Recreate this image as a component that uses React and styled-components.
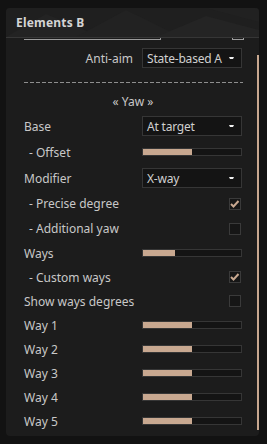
import styled, { createGlobalStyle } from "styled-components";

const GlobalStyle = createGlobalStyle`
  html, body {
    margin: 0;
    padding: 0;
    background: #121212;
  }
  body {
    font-family: "Noto Sans", "Open Sans", sans-serif;
  }
`;

const TAN = "#c8a890";

const Panel = styled.div`
  margin: 8px 8px 8px 6px;
  width: 253px;
  height: 428px;
  background: #1c1c1c;
  border-radius: 4px;
  overflow: hidden;
  display: flex;
  flex-direction: column;
`;

const Header = styled.div`
  position: relative;
  height: 29px;
  flex-shrink: 0;
  background: #1f1f1f;
  border-bottom: 1px solid #363636;
  display: flex;
  align-items: center;
  padding-left: 10px;
  overflow: hidden;
`;

const HeaderArt = styled.svg`
  position: absolute;
  inset: 0;
  width: 100%;
  height: 100%;
`;

const Title = styled.span`
  position: relative;
  color: #d4d4d4;
  font-weight: 700;
  font-size: 12px;
  letter-spacing: 0.2px;
`;

const Body = styled.div`
  position: relative;
  flex: 1;
  overflow: hidden;
  padding: 0 17px 0 18px;
`;

const Scrollbar = styled.div`
  position: absolute;
  right: 0;
  top: 17px;
  bottom: 6px;
  width: 2px;
  background: ${TAN};
`;

const Stub = styled.div`
  height: 2px;
  display: flex;
  justify-content: space-between;
  align-items: flex-end;
`;

const StubLine = styled.div`
  width: ${(p) => p.$w}px;
  height: 2px;
  border-bottom: 1px solid #9c9c9c;
  border-right: 1px solid #9c9c9c;
  border-left: ${(p) => (p.$tick ? "1px solid #9c9c9c" : "none")};
  box-sizing: border-box;
  margin-right: ${(p) => p.$mr || 0}px;
`;

const Row = styled.div`
  height: ${(p) => p.$h || 24}px;
  margin-top: ${(p) => p.$mt || 0}px;
  display: flex;
  align-items: center;
  justify-content: ${(p) => (p.$right ? "flex-end" : "space-between")};
  gap: ${(p) => (p.$right ? "9px" : "0")};
`;

const Label = styled.span`
  color: #c8c8c8;
  font-size: 12px;
  padding-left: ${(p) => (p.$sub ? "5px" : "0")};
  white-space: pre;
`;

const Dashed = styled.div`
  margin-top: 11px;
  height: 1px;
  margin-right: -1px;
  background: repeating-linear-gradient(
    to right,
    #8e8e8e 0 4px,
    transparent 4px 6px
  );
`;

const SectionTitle = styled.div`
  margin-top: 8px;
  height: 20px;
  display: flex;
  align-items: center;
  justify-content: center;
  color: #c8c8c8;
  font-size: 12px;
`;

const Select = styled.div`
  width: 100px;
  height: 20px;
  box-sizing: border-box;
  background: #141414;
  border: 1px solid #363636;
  display: flex;
  align-items: center;
  padding: 0 7px 0 4px;
`;

const SelectText = styled.span`
  white-space: nowrap;
  color: #d0d0d0;
  font-size: 12px;
  letter-spacing: -0.2px;
`;

const Arrow = styled.svg`
  width: 5px;
  height: 3px;
  margin-left: auto;
  flex-shrink: 0;
`;

const Slider = styled.div`
  width: 100px;
  height: 8px;
  box-sizing: border-box;
  background: #141414;
  border: 1px solid #363636;
`;

const Fill = styled.div`
  height: 100%;
  background: ${TAN};
`;

const Check = styled.div`
  width: 12px;
  height: 12px;
  box-sizing: border-box;
  background: #161616;
  border: 1px solid #3a3a3a;
  margin-right: 1px;
  display: flex;
  align-items: center;
  justify-content: center;
`;

const SelectBox = ({ value }) => (
  <Select>
    <SelectText>{value}</SelectText>
    <Arrow viewBox="0 0 5 3">
      <polygon points="0,0 5,0 4,2 1,2" fill="#f0f0f0" />
    </Arrow>
  </Select>
);

const SliderBar = ({ pct }) => (
  <Slider>
    <Fill style={{ width: `${pct}%` }} />
  </Slider>
);

const CheckBox = ({ on }) => (
  <Check>
    {on && (
      <svg width="10" height="10" viewBox="0 0 10 10">
        <polyline
          points="1,5 3.5,7.5 8.5,2"
          fill="none"
          stroke={TAN}
          strokeWidth="2"
        />
      </svg>
    )}
  </Check>
);

const rows = [
  { label: "Base", h: 26, mt: 2, kind: "select", value: "At target" },
  { label: "- Offset", sub: true, h: 26, kind: "slider", pct: 50 },
  { label: "Modifier", h: 26, kind: "select", value: "X-way" },
  { label: "- Precise degree", sub: true, h: 25, kind: "check", on: true },
  { label: "- Additional yaw", sub: true, h: 25, kind: "check", on: false },
  { label: "Ways", kind: "slider", pct: 33 },
  { label: "- Custom ways", sub: true, kind: "check", on: true },
  { label: "Show ways degrees", kind: "check", on: false },
  { label: "Way 1", kind: "slider", pct: 50 },
  { label: "Way 2", kind: "slider", pct: 50 },
  { label: "Way 3", kind: "slider", pct: 50 },
  { label: "Way 4", kind: "slider", pct: 50 },
  { label: "Way 5", kind: "slider", pct: 50 },
];

export default function App() {
  return (
    <>
      <GlobalStyle />
      <Panel>
        <Header>
          <HeaderArt viewBox="0 0 253 29" preserveAspectRatio="none">
            <polygon points="0,29 40,6 95,29" fill="#232323" />
            <polygon points="70,29 120,2 175,29" fill="#222222" />
            <polygon points="150,29 200,8 253,22 253,29" fill="#242424" />
            <polygon points="200,0 253,0 253,14" fill="#212121" />
          </HeaderArt>
          <Title>Elements B</Title>
        </Header>
        <Body>
          <Scrollbar />
          <Stub>
            <StubLine $w={137} />
            <StubLine $w={12} $tick $mr={-2} />
          </Stub>
          <Row $right $h={26} $mt={5}>
            <Label>Anti-aim</Label>
            <SelectBox value="State-based A" />
          </Row>
          <Dashed />
          <SectionTitle>« Yaw »</SectionTitle>
          {rows.map((r) => (
            <Row key={r.label} $h={r.h} $mt={r.mt}>
              <Label $sub={r.sub}>{r.label}</Label>
              {r.kind === "select" && <SelectBox value={r.value} />}
              {r.kind === "slider" && <SliderBar pct={r.pct} />}
              {r.kind === "check" && <CheckBox on={r.on} />}
            </Row>
          ))}
        </Body>
      </Panel>
    </>
  );
}
